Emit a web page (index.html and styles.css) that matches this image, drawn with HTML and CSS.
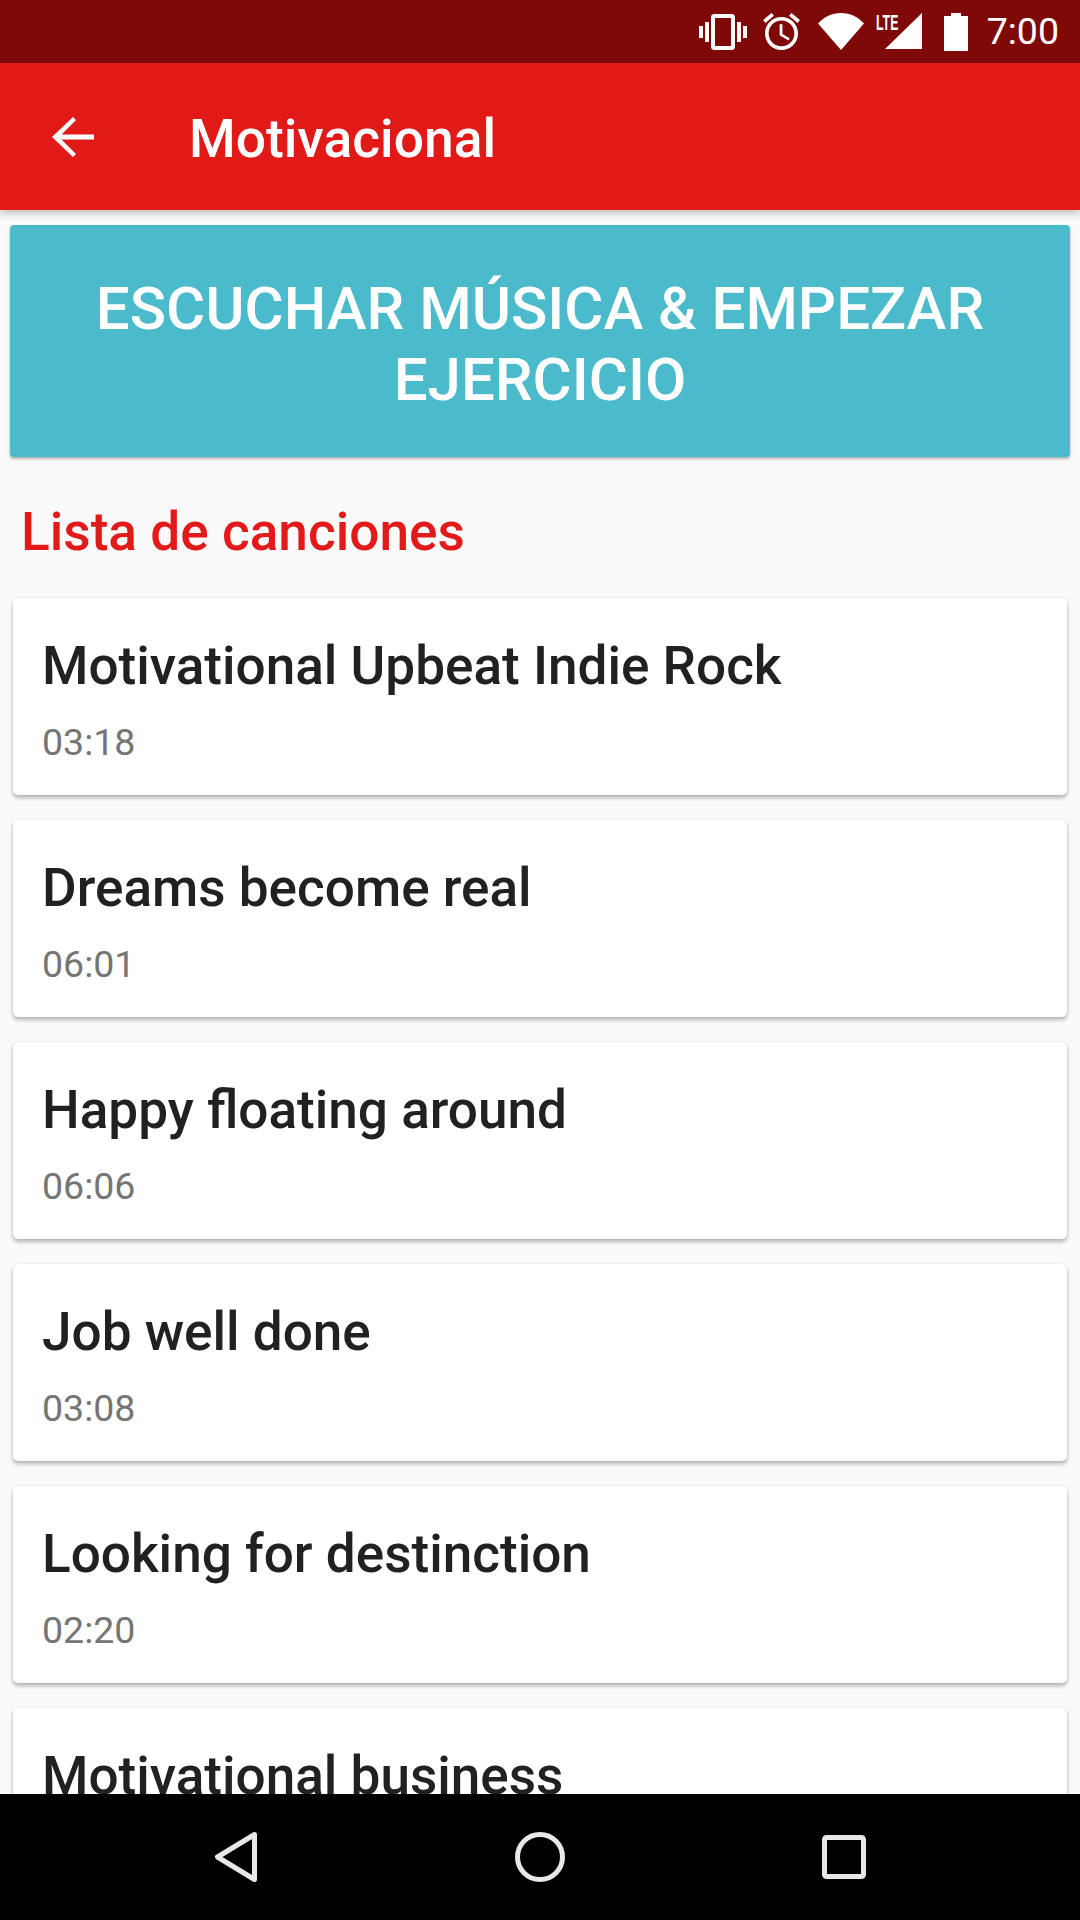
FILE: index.html
```html
<!DOCTYPE html>
<html lang="es">
<head>
<meta charset="utf-8">
<title>Motivacional</title>
<link rel="stylesheet" href="styles.css">
</head>
<body>
<div class="screen">
  <div class="statusbar">
    <svg class="ic-vibrate" viewBox="0 0 24 24"><path d="M0 15h2V9H0v6zm3 2h2V7H3v10zm19-8v6h2V9h-2zm-3 8h2V7h-2v10zM16.5 3h-9C6.67 3 6 3.67 6 4.5v15c0 .83.67 1.5 1.5 1.5h9c.83 0 1.5-.67 1.5-1.5v-15c0-.83-.67-1.5-1.5-1.5zM16 19H8V5h8v14z"/></svg>
    <svg class="ic-alarm" viewBox="2 1.86 20 20.14"><path d="M22 5.72l-4.6-3.86-1.29 1.53 4.6 3.86L22 5.72zM7.88 3.39L6.6 1.86 2 5.71l1.29 1.53 4.59-3.85zM12.5 8H11v6l4.75 2.85.75-1.23-4-2.37V8zM12 4c-4.97 0-9 4.03-9 9s4.02 9 9 9c4.97 0 9-4.03 9-9s-4.03-9-9-9zm0 16c-3.87 0-7-3.13-7-7s3.13-7 7-7 7 3.13 7 7-3.13 7-7 7z"/></svg>
    <svg class="ic-wifi" viewBox="0 0 46 37"><path d="M0 10.500C6 4 14 0 23 0s17 4 23 10.500L23 37z"/></svg>
    <div class="signal">
      <span class="lte">LTE</span>
      <svg class="ic-signal" viewBox="0 0 37 36"><path d="M37 0v36H0z"/></svg>
    </div>
    <svg class="ic-battery" viewBox="0 0 24 38"><path d="M7 0h10v3h7v35H0V3h7z"/></svg>
    <span class="clock">7:00</span>
  </div>
  <header class="toolbar">
    <svg class="ic-back" viewBox="0 0 42 42"><path d="M42 18.500H9.500L24 4l-3-3L0 21l21 20 3-3L9.500 23.500H42z"/></svg>
    <h1 class="toolbar-title">Motivacional</h1>
  </header>
  <main class="content">
    <button class="cta">ESCUCHAR MÚSICA &amp; EMPEZAR EJERCICIO</button>
    <h2 class="section-title">Lista de canciones</h2>
    <ul class="songs">
      <li class="song"><div class="song-name">Motivational Upbeat Indie Rock</div><div class="song-time">03:18</div></li>
      <li class="song"><div class="song-name">Dreams become real</div><div class="song-time">06:01</div></li>
      <li class="song"><div class="song-name">Happy floating around</div><div class="song-time">06:06</div></li>
      <li class="song"><div class="song-name">Job well done</div><div class="song-time">03:08</div></li>
      <li class="song"><div class="song-name">Looking for destinction</div><div class="song-time">02:20</div></li>
      <li class="song"><div class="song-name">Motivational business</div></li>
    </ul>
  </main>
  <nav class="navbar">
    <svg class="nav-back" viewBox="0 0 42 50"><path d="M39.500 2.500 L2.500 25 L39.500 47.500 Z"/></svg>
    <svg class="nav-home" viewBox="0 0 50 50"><circle cx="25" cy="25" r="22.500"/></svg>
    <svg class="nav-recent" viewBox="0 0 44 44"><rect x="2.500" y="2.500" width="39" height="39" rx="2"/></svg>
  </nav>
</div>
</body>
</html>
```

FILE: styles.css
```css
* { box-sizing: border-box; }
html, body { margin: 0; padding: 0; }
body { font-family: Roboto, "Noto Sans", sans-serif; background: #fafafa; }
.screen { width: 1080px; height: 1920px; display: flex; flex-direction: column; overflow: hidden; }

.statusbar { height: 63px; flex: none; background: #7f0808; display: flex; align-items: center; padding-right: 21px; justify-content: flex-end; fill: #fff; color: #fff; }
.statusbar svg { display: block; }
.ic-vibrate { width: 48px; height: 48px; margin-top: 1px; }
.ic-alarm { width: 37px; height: 37px; margin-left: 16px; }
.ic-wifi { width: 46px; height: 37px; margin-left: 18px; }
.signal { position: relative; width: 46px; height: 37px; margin-left: 12px; display: flex; justify-content: flex-end; }
.ic-signal { width: 37px; height: 36px; }
.lte { position: absolute; left: 0; top: -1px; font: bold 22px/22px "Liberation Sans", sans-serif; transform: scaleX(.56); transform-origin: left top; color: #fff; }
.ic-battery { width: 24px; height: 38px; margin-left: 22px; }
.clock { font-size: 37.500px; margin-left: 19px; line-height: 63px; }

.toolbar { height: 147px; flex: none; background: #e11a18; display: flex; align-items: center; padding: 0 0 0 52px; box-shadow: 0 3px 8px rgba(0,0,0,.25); position: relative; z-index: 1; }
.ic-back { width: 42px; height: 42px; fill: #fff; flex: none; }
.toolbar-title { margin: 4px 0 0 95px; font-size: 53.400px; font-weight: 500; color: #fff; }

.content { flex: 1; min-height: 0; overflow: hidden; }
.cta { display: block; width: 1060px; height: 232px; margin: 15px 10px 0; border: 0; border-radius: 4px; background: #4bbbcc; color: #fff; font: 500 60px/71px Roboto, sans-serif; padding: 6px 60px 0; box-shadow: 0 2px 3px rgba(0,0,0,.3); }
.section-title { margin: 43px 0 0 21px; font-size: 53.200px; line-height: 64px; font-weight: 500; color: #e31a1a; }
.songs { list-style: none; margin: 34px 13px 0; padding: 0; display: flex; flex-direction: column; gap: 25px; }
.song { height: 197px; flex: none; background: #fff; border-radius: 5px; padding: 33px 29px 0; box-shadow: 0 3px 4px rgba(0,0,0,.27), 0 0 2px rgba(0,0,0,.12); }
.song-name { font-size: 53.100px; line-height: 70px; font-weight: 500; color: #212121; }
.song-time { font-size: 37.500px; line-height: 46px; margin-top: 18px; color: #757575; }

.navbar { height: 126px; flex: none; background: #000; position: relative; z-index: 1; display: flex; align-items: center; justify-content: center; fill: none; stroke: #e8e8e8; stroke-width: 5; }
.navbar svg { display: block; }
.nav-back { width: 42px; height: 50px; margin-right: 258px; stroke-linejoin: round; }
.nav-home { width: 50px; height: 50px; }
.nav-recent { width: 44px; height: 44px; margin-left: 257px; }
```
